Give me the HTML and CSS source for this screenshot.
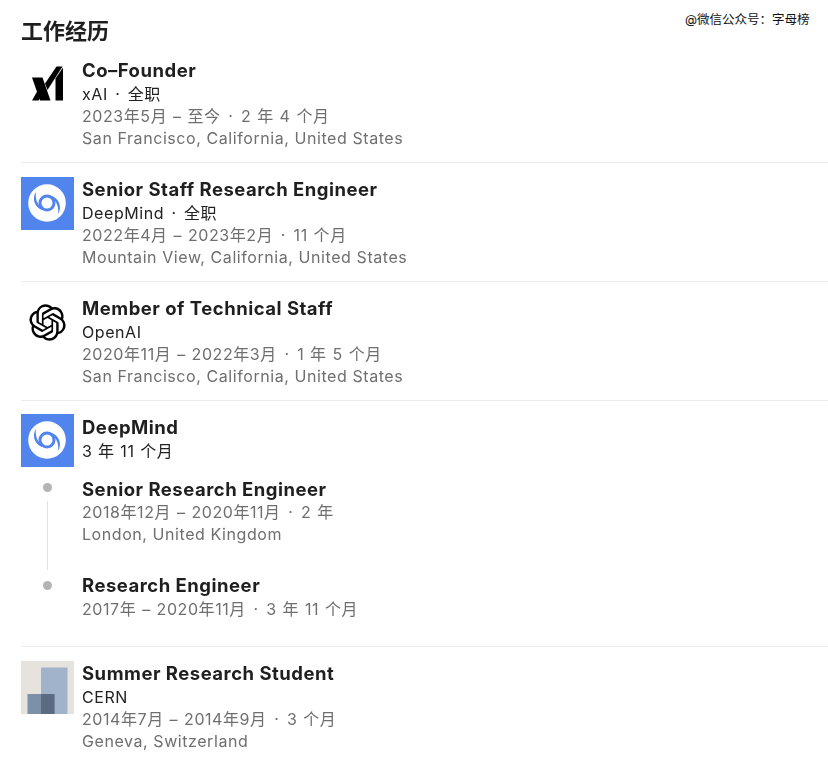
FILE: index.html
```html
<!DOCTYPE html>
<html lang="zh-CN">
<head>
<meta charset="utf-8">
<title>工作经历</title>
<link rel="stylesheet" href="styles.css">
</head>
<body>
<main class="page">
  <div class="watermark">@微信公众号：字母榜</div>
  <div class="content">
  <h1 class="heading">工作经历</h1>
  <ul class="list">
    <li class="job job-first">
      <svg class="logo" viewBox="0 0 53 53">
        <polygon points="11,19.500 21.500,19.500 29.500,42.500 19,42.500" fill="#000"/>
        <polygon points="11,42.500 17.500,42.500 22.500,34 19.500,27.500" fill="#000"/>
        <polygon points="24,25.500 26.500,32 41.500,8.500 35.500,8.500" fill="#000"/>
        <polygon points="34.500,20.500 42,9.500 42,42.500 34.500,42.500" fill="#000"/>
      </svg>
      <div class="info">
        <div class="title">Co–Founder</div>
        <div class="org">xAI <span class="sep">·</span> 全职</div>
        <div class="meta date">2023年5月 – 至今 <span class="sep">·</span> 2 年 4 个月</div>
        <div class="meta">San Francisco, California, United States</div>
      </div>
    </li>
    <li class="job">
      <svg class="logo" viewBox="0 0 53 53">
        <rect width="53" height="53" fill="#5284ee"/>
        <circle cx="26" cy="26" r="18.800" fill="#fff"/>
        <circle cx="26" cy="26" r="7" fill="none" stroke="#5284ee" stroke-width="3"/>
        <path d="M30 19C37 20 42 30 37 37C38 31 36 24 31 22Z" fill="#5284ee"/>
        <path d="M22 33C15 32 10 22 15 15C14 21 16 28 21 30Z" fill="#5284ee"/>
      </svg>
      <div class="info">
        <div class="title">Senior Staff Research Engineer</div>
        <div class="org">DeepMind <span class="sep">·</span> 全职</div>
        <div class="meta date">2022年4月 – 2023年2月 <span class="sep">·</span> 11 个月</div>
        <div class="meta">Mountain View, California, United States</div>
      </div>
    </li>
    <li class="job">
      <svg class="logo" viewBox="-5.500 -5.500 35 35">
        <path fill="#000" d="M22.2819 9.8211a5.9847 5.9847 0 0 0-.5157-4.9108 6.0462 6.0462 0 0 0-6.5098-2.9A6.0651 6.0651 0 0 0 4.9807 4.1818a5.9847 5.9847 0 0 0-3.9977 2.9 6.0462 6.0462 0 0 0 .7427 7.0966 5.98 5.98 0 0 0 .511 4.9107 6.051 6.051 0 0 0 6.5146 2.9001A5.9847 5.9847 0 0 0 13.2599 24a6.0557 6.0557 0 0 0 5.7718-4.2058 5.9894 5.9894 0 0 0 3.9977-2.9001 6.0557 6.0557 0 0 0-.7475-7.0729zm-9.022 12.6081a4.4755 4.4755 0 0 1-2.8764-1.0408l.1419-.0804 4.7783-2.7582a.7948.7948 0 0 0 .3927-.6813v-6.7369l2.02 1.1686a.071.071 0 0 1 .038.052v5.5826a4.504 4.504 0 0 1-4.4945 4.4944zm-9.6607-4.1254a4.4708 4.4708 0 0 1-.5346-3.0137l.142.0852 4.783 2.7582a.7712.7712 0 0 0 .7806 0l5.8428-3.3685v2.3324a.0804.0804 0 0 1-.0332.0615L9.74 19.9502a4.4992 4.4992 0 0 1-6.1408-1.6464zM2.3408 7.8956a4.485 4.485 0 0 1 2.3655-1.9728V11.6a.7664.7664 0 0 0 .3879.6765l5.8144 3.3543-2.0201 1.1685a.0757.0757 0 0 1-.071 0l-4.8303-2.7865A4.504 4.504 0 0 1 2.3408 7.872zm16.5963 3.8558L13.1038 8.364 15.1192 7.2a.0757.0757 0 0 1 .071 0l4.8303 2.7913a4.4944 4.4944 0 0 1-.6765 8.1042v-5.6772a.79.79 0 0 0-.407-.667zm2.0107-3.0231l-.142-.0852-4.7735-2.7818a.7759.7759 0 0 0-.7854 0L9.409 9.2297V6.8974a.0662.0662 0 0 1 .0284-.0615l4.8303-2.7866a4.4992 4.4992 0 0 1 6.6802 4.66zM8.3065 12.863l-2.02-1.1638a.0804.0804 0 0 1-.038-.0567V6.0742a4.4992 4.4992 0 0 1 7.3757-3.4537l-.142.0805L8.704 5.459a.7948.7948 0 0 0-.3927.6813zm1.0976-2.3654l2.602-1.4998 2.6069 1.4998v2.9994l-2.5974 1.4997-2.6067-1.4997Z"/>
      </svg>
      <div class="info">
        <div class="title">Member of Technical Staff</div>
        <div class="org">OpenAI</div>
        <div class="meta date">2020年11月 – 2022年3月 <span class="sep">·</span> 1 年 5 个月</div>
        <div class="meta">San Francisco, California, United States</div>
      </div>
    </li>
    <li class="job job-group">
      <div class="group-head">
        <svg class="logo logo-group" viewBox="0 0 53 53">
          <rect width="53" height="53" fill="#5284ee"/>
          <circle cx="26" cy="26" r="18.800" fill="#fff"/>
          <circle cx="26" cy="26" r="7" fill="none" stroke="#5284ee" stroke-width="3"/>
          <path d="M30 19C37 20 42 30 37 37C38 31 36 24 31 22Z" fill="#5284ee"/>
          <path d="M22 33C15 32 10 22 15 15C14 21 16 28 21 30Z" fill="#5284ee"/>
        </svg>
        <div class="info">
          <div class="title">DeepMind</div>
          <div class="org">3 年 11 个月</div>
        </div>
      </div>
      <div class="role role-long">
        <div class="rail"><span class="dot"></span><span class="line"></span></div>
        <div class="info">
          <div class="title">Senior Research Engineer</div>
          <div class="meta date">2018年12月 – 2020年11月 <span class="sep">·</span> 2 年</div>
          <div class="meta">London, United Kingdom</div>
        </div>
      </div>
      <div class="role">
        <div class="rail rail-last"><span class="dot"></span></div>
        <div class="info">
          <div class="title">Research Engineer</div>
          <div class="meta date">2017年 – 2020年11月 <span class="sep">·</span> 3 年 11 个月</div>
        </div>
      </div>
    </li>
    <li class="job">
      <svg class="logo" viewBox="0 0 53 53">
        <rect width="53" height="53" fill="#e6e3de"/>
        <rect x="20" y="6.500" width="26.500" height="46.500" fill="#a1b3cb"/>
        <rect x="6.500" y="33" width="27" height="20" fill="#7c90a9"/>
        <rect x="20" y="33" width="13.500" height="20" fill="#5d6b80"/>
      </svg>
      <div class="info">
        <div class="title">Summer Research Student</div>
        <div class="org">CERN</div>
        <div class="meta date">2014年7月 – 2014年9月 <span class="sep">·</span> 3 个月</div>
        <div class="meta">Geneva, Switzerland</div>
      </div>
    </li>
  </ul>
  </div>
</main>
</body>
</html>
```
FILE: styles.css
```css
* { box-sizing: border-box; }
html, body { margin: 0; background: #fff; }
body {
  font-family: Inter, "Noto Sans CJK SC", sans-serif;
  color: #1f1f1f;
}
.page {
  position: relative;
  width: 828px;
  height: 771px;
  overflow: hidden;
}
.content {
  padding: 17px 0 0 21px;
  filter: blur(0.35px);
}
.watermark {
  position: absolute;
  top: 13px;
  left: 685px;
  font-size: 12.500px;
  line-height: 14px;
  color: #111;
  white-space: nowrap;
}
.heading {
  margin: 0 0 13px;
  font-size: 22px;
  line-height: 28px;
  font-weight: 600;
  color: #1f1f1f;
}
.list { list-style: none; margin: 0; padding: 0; }
.job {
  display: flex;
  gap: 8px;
  height: 119px;
  padding-top: 14px;
  border-top: 1px solid #ececec;
}
.job-first { height: 104px; border-top: 0; padding-top: 0; }
.job-group {
  display: block;
  height: 246px;
}
.group-head { display: flex; gap: 8px; height: 62px; }
.logo { width: 53px; height: 53px; flex: none; display: block; margin-top: -0.500px; }
.logo-group { margin-top: -1px; }
.info { min-width: 0; }
.title {
  font-size: 18.500px;
  line-height: 25px;
  font-weight: 650;
  letter-spacing: 0.500px;
  color: #1f1f1f;
}
.org {
  font-size: 16px;
  line-height: 22px;
  letter-spacing: 0.570px;
  word-spacing: 0.600px;
  color: #222;
}
.meta {
  font-size: 16px;
  line-height: 22px;
  letter-spacing: 0.570px;
  color: #6f6f6f;
}
.date { word-spacing: 0.800px; }
.sep { padding: 0 1.700px; }
.role { display: flex; gap: 8px; }
.role-long { height: 96px; }
.role-long .title { margin-bottom: -1px; }
.rail {
  width: 53px;
  flex: none;
  display: flex;
  flex-direction: column;
  align-items: center;
  padding-top: 6px;
}
.rail-last { padding-top: 8px; }
.dot {
  width: 9px;
  height: 9px;
  border-radius: 50%;
  background: #b4b4b4;
  flex: none;
}
.line {
  width: 1.500px;
  height: 69px;
  margin-top: 9px;
  background: #e0e0e0;
}
```
